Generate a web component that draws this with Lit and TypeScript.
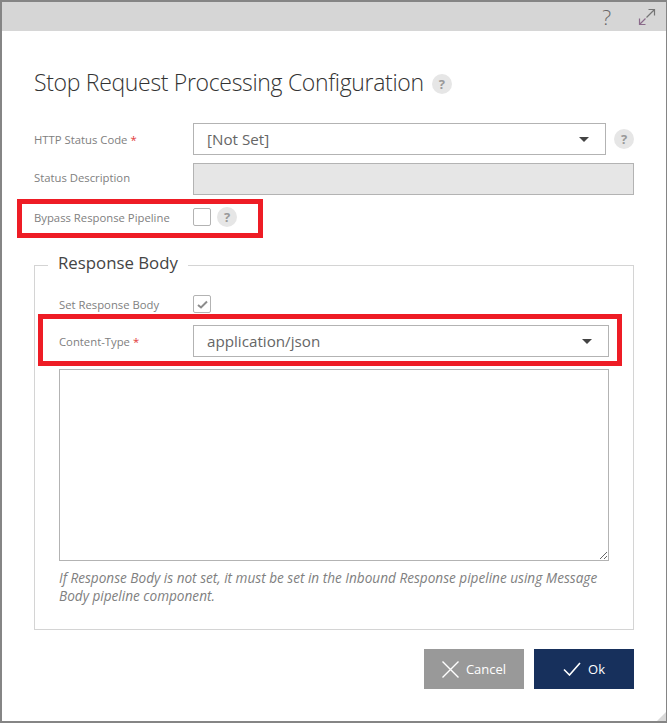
import { LitElement, html, css } from "lit";
import { customElement } from "lit/decorators.js";

@customElement("app-root")
export class AppRoot extends LitElement {
  static styles = css`
    :host {
      display: block;
      width: 667px;
      height: 723px;
      box-sizing: border-box;
      border: 2px solid #858585;
      border-right-width: 1px;
      background: #fff;
      position: relative;
      overflow: hidden;
      font-family: "Open Sans", "Noto Sans", sans-serif;
      color: #777;
    }
    .header {
      height: 29px;
      background: #d6d6d6;
      display: flex;
      align-items: center;
      justify-content: flex-end;
      padding-right: 10px;
      gap: 27px;
    }
    .header .q {
      font-size: 21px;
      font-weight: 300;
      color: #666;
      line-height: 29px;
      padding-top: 2px;
    }
    .body {
      padding: 0 32px;
    }
    h1 {
      margin: 0;
      height: 92px;
      display: flex;
      align-items: center;
      gap: 8px;
      font-size: 23px;
      letter-spacing: -0.32px;
      font-weight: 300;
      color: #333;
      padding-top: 10px;
      box-sizing: border-box;
    }
    h1 .help {
      margin-top: 4px;
      letter-spacing: 0;
    }
    .help {
      width: 20px;
      height: 20px;
      border-radius: 50%;
      background: #e6e6e6;
      color: #999;
      font-size: 13px;
      font-weight: 700;
      display: flex;
      align-items: center;
      justify-content: center;
      flex: none;
    }
    .row {
      display: flex;
      align-items: center;
      height: 32px;
      margin-bottom: 8px;
      position: relative;
    }
    .row.check {
      height: 30px;
      margin: -1px 0 0;
    }
    .row.check .help {
      margin-left: 6px;
    }
    .row.short {
      height: 18px;
      margin-bottom: 12px;
    }
    .row.gap {
      margin-bottom: 12px;
    }
    label {
      width: 159px;
      flex: none;
      font-size: 11.3px;
      color: #808080;
    }
    label.up {
      padding-bottom: 3px;
    }
    .in-fieldset label {
      width: 134px;
    }
    .req {
      color: #e23b3b;
    }
    .select {
      position: relative;
      flex: 1;
      height: 32px;
    }
    .select select,
    input {
      width: 100%;
      height: 100%;
      box-sizing: border-box;
      border: 1px solid #b3b3b3;
      border-radius: 0;
      background: #fff;
      font-family: inherit;
      font-size: 15.2px;
      color: #666;
      appearance: none;
      padding: 0 13px;
      outline: none;
      display: block;
    }
    input {
      flex: 1;
      width: auto;
      background: #e6e6e6;
    }
    .caret {
      position: absolute;
      right: 17px;
      top: 14px;
      width: 0;
      height: 0;
      border: 5px solid transparent;
      border-top: 5px solid #444;
      border-bottom: 0;
      pointer-events: none;
    }
    .status .select {
      flex: none;
      width: 413px;
    }
    .status .help {
      margin-left: 8px;
    }
    .box {
      width: 18px;
      height: 18px;
      box-sizing: border-box;
      border: 1px solid #b3b3b3;
      border-radius: 2px;
      background: #fff;
      flex: none;
      display: flex;
      align-items: center;
      justify-content: center;
    }
    .red::after {
      content: "";
      position: absolute;
      border: 5px solid #ee1c25;
      pointer-events: none;
      box-sizing: border-box;
    }
    .red.a::after {
      left: -17px;
      width: 246px;
      top: -3px;
      height: 39px;
    }
    .red.b::after {
      left: -21px;
      width: 584px;
      top: -11px;
      height: 52px;
    }
    fieldset {
      margin: 19px 0 0;
      padding: 0 24px 24px;
      border: 1px solid #d4d4d4;
      min-width: 0;
    }
    legend {
      margin-left: -11px;
      padding: 0 10px 4px;
      font-size: 16.8px;
      color: #444;
      line-height: 24px;
    }
    .in-fieldset {
      padding-top: 16px;
    }
    textarea {
      display: block;
      width: 100%;
      height: 192px;
      box-sizing: border-box;
      border: 1px solid #b3b3b3;
      border-radius: 0;
      outline: none;
      background: #fff;
      margin: 0;
    }
    .note {
      margin: 8px 0 0;
      font-size: 13.6px;
      line-height: 18px;
      font-style: italic;
      color: #808080;
    }
    .actions {
      display: flex;
      justify-content: flex-end;
      gap: 10px;
      margin-top: 19px;
    }
    button {
      width: 100px;
      height: 40px;
      border: 0;
      font-family: inherit;
      font-size: 13px;
      color: #fff;
      display: flex;
      align-items: center;
      justify-content: center;
      gap: 7px;
      padding: 0;
    }
    .cancel {
      background: #999;
    }
    .ok {
      background: #17305c;
    }
    .grip {
      position: absolute;
      right: 0;
      bottom: 0;
    }
  `;

  render() {
    return html`
      <div class="header">
        <span class="q">?</span>
        <svg width="18" height="18" viewBox="0 0 18 18" fill="none" stroke-width="1.2">
          <path stroke="#8a6a8a" d="M1.5 16.5 L7.5 10.5 M1.5 10.5 V16.5 H7.5" />
          <path stroke="#757575" d="M16.5 1.5 L8.5 9.5 M10.5 1.5 H16.5 V7.5" />
        </svg>
      </div>
      <div class="body">
        <h1>Stop Request Processing Configuration <span class="help">?</span></h1>
        <div class="row status">
          <label>HTTP Status Code <span class="req">*</span></label>
          <div class="select">
            <select><option>[Not Set]</option></select>
            <span class="caret"></span>
          </div>
          <span class="help">?</span>
        </div>
        <div class="row">
          <label class="up">Status Description</label>
          <input disabled />
        </div>
        <div class="row check red a">
          <label>Bypass Response Pipeline</label>
          <span class="box"></span>
          <span class="help">?</span>
        </div>
        <fieldset>
          <legend>Response Body</legend>
          <div class="in-fieldset">
            <div class="row short">
              <label>Set Response Body</label>
              <span class="box">
                <svg width="11" height="9" viewBox="0 0 11 9" fill="none" stroke="#8c8c8c" stroke-width="2">
                  <path d="M1 5 L4 7.5 L10 1.5" />
                </svg>
              </span>
            </div>
            <div class="row gap red b">
              <label>Content-Type <span class="req">*</span></label>
              <div class="select">
                <select><option>application/json</option></select>
                <span class="caret"></span>
              </div>
            </div>
            <textarea></textarea>
            <p class="note">
              If Response Body is not set, it must be set in the Inbound Response pipeline using Message Body pipeline
              component.
            </p>
          </div>
        </fieldset>
        <div class="actions">
          <button class="cancel">
            <svg width="17" height="17" viewBox="0 0 17 17" fill="none" stroke="#fff" stroke-width="1.4">
              <path d="M0.5 0.5 L16.5 16.5 M16.5 0.5 L0.5 16.5" />
            </svg>
            Cancel
          </button>
          <button class="ok">
            <svg width="18" height="14" viewBox="0 0 18 14" fill="none" stroke="#fff" stroke-width="1.6">
              <path d="M1 7.5 L6.5 13 L17 1" />
            </svg>
            Ok
          </button>
        </div>
      </div>
      <svg class="grip" width="10" height="10" viewBox="0 0 10 10">
        <path d="M10 1 V10 H1 Z" fill="#d9d9d9" />
      </svg>
    `;
  }
}
